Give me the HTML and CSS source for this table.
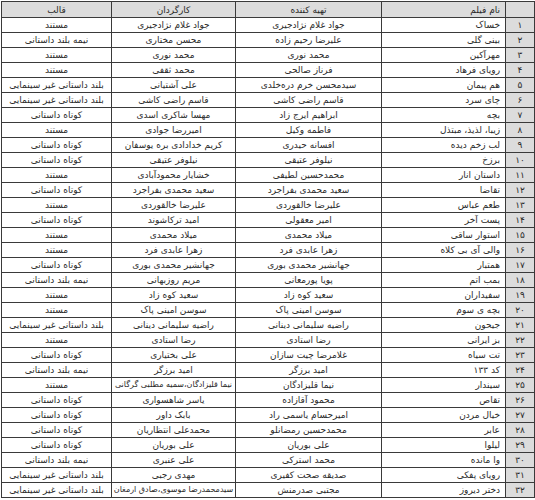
FILE: index.html
```html
<!DOCTYPE html>
<html lang="fa" dir="rtl">
<head>
<meta charset="utf-8">
<title>فهرست فیلم‌ها</title>
<link rel="stylesheet" href="styles.css">
</head>
<body>
<table class="films">
<thead>
<tr><th class="c-num"></th><th class="c-name">نام فیلم</th><th class="c-prod">تهیه کننده</th><th class="c-dir">کارگردان</th><th class="c-fmt">قالب</th></tr>
</thead>
<tbody>
<tr><td class="num">۱</td><td class="name">خساک</td><td>جواد غلام نژادجیری</td><td>جواد غلام نژادجیری</td><td>مستند</td></tr>
<tr><td class="num">۲</td><td class="name">بینی گلی</td><td>علیرضا رحیم زاده</td><td>محسن مختاری</td><td>نیمه بلند داستانی</td></tr>
<tr><td class="num">۳</td><td class="name">مهرآکین</td><td>محمد نوری</td><td>محمد نوری</td><td>مستند</td></tr>
<tr><td class="num">۴</td><td class="name">رویای فرهاد</td><td>فرناز صالحی</td><td>محمد ثقفی</td><td>مستند</td></tr>
<tr><td class="num">۵</td><td class="name">هم پیمان</td><td>سیدمحسن خرم دره‌خلدی</td><td>علی آشتیانی</td><td>بلند داستانی غیر سینمایی</td></tr>
<tr><td class="num">۶</td><td class="name">چای سرد</td><td>قاسم راضی کاشی</td><td>قاسم راضی کاشی</td><td>بلند داستانی غیر سینمایی</td></tr>
<tr><td class="num">۷</td><td class="name">بچه</td><td>ابراهیم ایرج زاد</td><td>مهسا شاکری اسدی</td><td>کوتاه داستانی</td></tr>
<tr><td class="num">۸</td><td class="name">زیبا، لذیذ، مبتذل</td><td>فاطمه وکیل</td><td>امیررضا جوادی</td><td>مستند</td></tr>
<tr><td class="num">۹</td><td class="name">لب زخم دیده</td><td>افسانه حیدری</td><td>کریم خدادادی بره یوسفان</td><td>کوتاه داستانی</td></tr>
<tr><td class="num">۱۰</td><td class="name">برزخ</td><td>نیلوفر عتیقی</td><td>نیلوفر عتیقی</td><td>کوتاه داستانی</td></tr>
<tr><td class="num">۱۱</td><td class="name">داستان انار</td><td>محمدحسین لطیفی</td><td>خشایار محمودآبادی</td><td>مستند</td></tr>
<tr><td class="num">۱۲</td><td class="name">تقاضا</td><td>سعید محمدی بفراجرد</td><td>سعید محمدی بفراجرد</td><td>کوتاه داستانی</td></tr>
<tr><td class="num">۱۳</td><td class="name">طعم عباس</td><td>علیرضا خالقوردی</td><td>علیرضا خالقوردی</td><td>مستند</td></tr>
<tr><td class="num">۱۴</td><td class="name">پست آخر</td><td>امیر معقولی</td><td>امید ترکاشوند</td><td>کوتاه داستانی</td></tr>
<tr><td class="num">۱۵</td><td class="name">استوار ساقی</td><td>میلاد محمدی</td><td>میلاد محمدی</td><td>مستند</td></tr>
<tr><td class="num">۱۶</td><td class="name">والی آی بی کلاه</td><td>زهرا عابدی فرد</td><td>زهرا عابدی فرد</td><td>مستند</td></tr>
<tr><td class="num">۱۷</td><td class="name">همتبار</td><td>جهانشیر محمدی بوری</td><td>جهانشیر محمدی بوری</td><td>کوتاه داستانی</td></tr>
<tr><td class="num">۱۸</td><td class="name">بمب اتم</td><td>پویا پورمعانی</td><td>مریم روزبهانی</td><td>نیمه بلند داستانی</td></tr>
<tr><td class="num">۱۹</td><td class="name">سفیداران</td><td>سعید کوه زاد</td><td>سعید کوه زاد</td><td>مستند</td></tr>
<tr><td class="num">۲۰</td><td class="name">بچه ی سوم</td><td>سوسن امینی پاک</td><td>سوسن امینی پاک</td><td>مستند</td></tr>
<tr><td class="num">۲۱</td><td class="name">جیحون</td><td>راضیه سلیمانی دینانی</td><td>راضیه سلیمانی دینانی</td><td>بلند داستانی غیر سینمایی</td></tr>
<tr><td class="num">۲۲</td><td class="name">بز ایرانی</td><td>رضا استادی</td><td>رضا استادی</td><td>مستند</td></tr>
<tr><td class="num">۲۳</td><td class="name">تت سیاه</td><td>غلامرضا چیت سازان</td><td>علی بختیاری</td><td>کوتاه داستانی</td></tr>
<tr><td class="num">۲۴</td><td class="name">کد ۱۳۳</td><td>امید برزگر</td><td>امید برزگر</td><td>نیمه بلند داستانی</td></tr>
<tr><td class="num">۲۵</td><td class="name">سیندار</td><td>نیما قلیزادگان</td><td class="tight">نیما قلیزادگان،سمیه مطلبی گرگانی</td><td>مستند</td></tr>
<tr><td class="num">۲۶</td><td class="name">تقاص</td><td>محمود آقازاده</td><td>یاسر شاهسواری</td><td>کوتاه داستانی</td></tr>
<tr><td class="num">۲۷</td><td class="name">خیال مردن</td><td>امیرحسام یاسمی راد</td><td>بابک داور</td><td>کوتاه داستانی</td></tr>
<tr><td class="num">۲۸</td><td class="name">عابر</td><td>محمدحسین رمضانلو</td><td>محمدعلی انتظاریان</td><td>کوتاه داستانی</td></tr>
<tr><td class="num">۲۹</td><td class="name">لیلوا</td><td>علی بوریان</td><td>علی بوریان</td><td>کوتاه داستانی</td></tr>
<tr><td class="num">۳۰</td><td class="name">وا مانده</td><td>محمد استرکی</td><td>علی عنبری</td><td>نیمه بلند داستانی</td></tr>
<tr><td class="num">۳۱</td><td class="name">رویای پفکی</td><td>صدیقه صحت کفیری</td><td>مهدی رجبی</td><td>بلند داستانی غیر سینمایی</td></tr>
<tr><td class="num">۳۲</td><td class="name">دختر دیروز</td><td>مجتبی صدرمنش</td><td class="tight">سیدمحمدرضا موسوی،صادق ارمغان</td><td>بلند داستانی غیر سینمایی</td></tr>
</tbody>
</table>
</body>
</html>
```

FILE: styles.css
```css
html, body {
  margin: 0;
  padding: 0;
  background: #ffffff;
}

body {
  padding: 1px 0 0 1px;
  font-family: "DejaVu Sans", "Noto Sans", sans-serif;
  font-size: 9px;
  color: #2a2a2a;
}

.films {
  direction: rtl;
  width: 534px;
  table-layout: fixed;
  border-collapse: separate;
  border-spacing: 0;
  border-top: 1px solid #3a3a3a;
  border-left: 1px solid #3a3a3a;
}

.films th,
.films td {
  box-sizing: border-box;
  border-right: 1px solid #3a3a3a;
  border-bottom: 1px solid #3a3a3a;
  padding: 0 1px;
  text-align: center;
  white-space: nowrap;
  overflow: hidden;
  font-weight: normal;
  line-height: 10px;
  vertical-align: middle;
}

.films th {
  height: 16px;
  background: #dcdcdc;
}

.films td {
  height: 15px;
}

.films .c-num { width: 29px; }
.films .c-name { width: 124px; }
.films .c-prod { width: 146px; }
.films .c-dir { width: 124px; }
.films .c-fmt { width: 110px; }

.films .c-name,
.films .name {
  text-align: right;
  padding-right: 5px;
}

.films .num {
  background: #dcdcdc;
}

.films .tight {
  font-size: 8px;
  padding: 0;
}
```
